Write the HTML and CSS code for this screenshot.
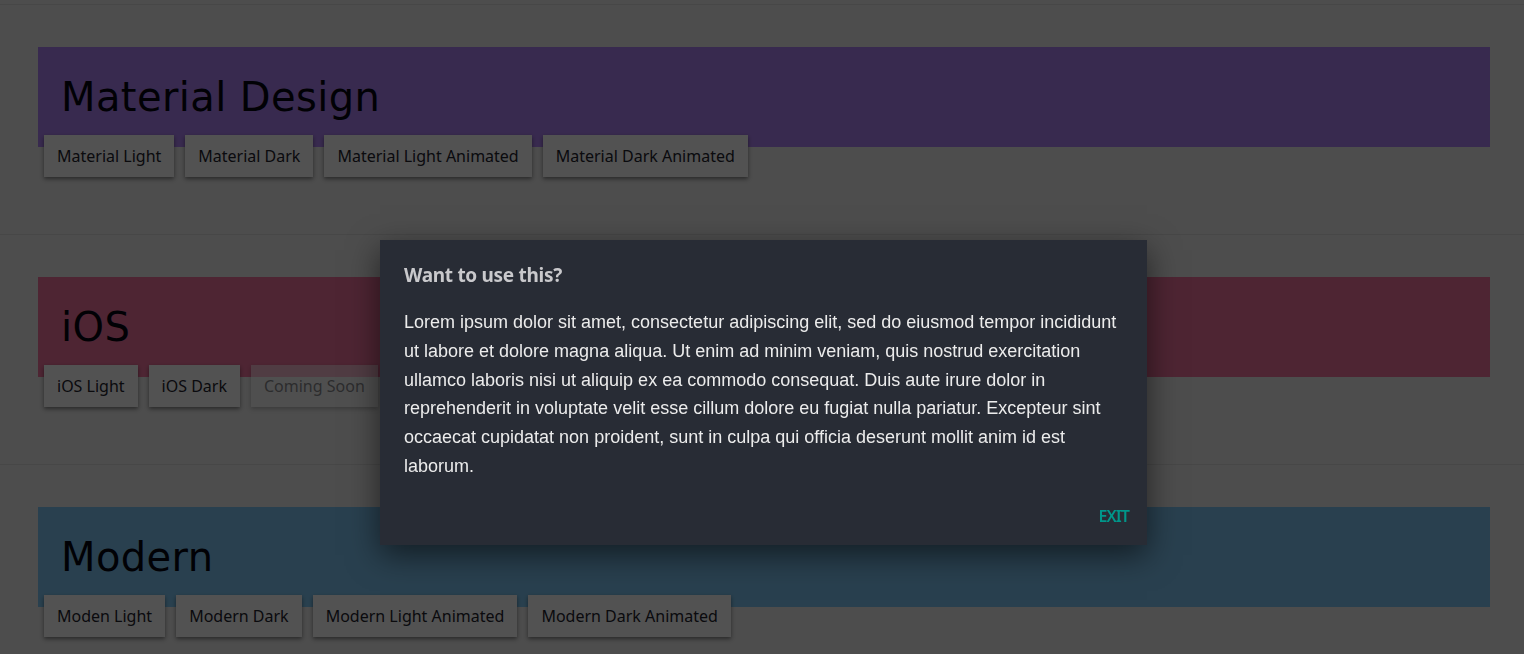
FILE: index.html
```html
<!DOCTYPE html>
<html lang="en">
<head>
    <meta charset="UTF-8">
    <meta name="viewport" content="width=device-width, initial-scale=1.0">
    <title>Themes</title>
    <link rel="stylesheet" href="styles.css">
</head>
<body>
    <section class="theme">
        <div class="banner banner-material">
            <h1>Material Design</h1>
        </div>
        <div class="buttons">
            <button>Material Light</button>
            <button>Material Dark</button>
            <button>Material Light Animated</button>
            <button>Material Dark Animated</button>
        </div>
    </section>

    <section class="theme">
        <div class="banner banner-ios">
            <h1>iOS</h1>
        </div>
        <div class="buttons">
            <button>iOS Light</button>
            <button>iOS Dark</button>
            <button class="soon" disabled>Coming Soon</button>
        </div>
    </section>

    <section class="theme">
        <div class="banner banner-modern">
            <h1>Modern</h1>
        </div>
        <div class="buttons">
            <button>Moden Light</button>
            <button>Modern Dark</button>
            <button>Modern Light Animated</button>
            <button>Modern Dark Animated</button>
        </div>
    </section>

    <div class="overlay"></div>

    <div class="dialog">
        <h2>Want to use this?</h2>
        <p>Lorem ipsum dolor sit amet, consectetur adipiscing elit, sed do eiusmod tempor incididunt ut labore et dolore magna aliqua. Ut enim ad minim veniam, quis nostrud exercitation ullamco laboris nisi ut aliquip ex ea commodo consequat. Duis aute irure dolor in reprehenderit in voluptate velit esse cillum dolore eu fugiat nulla pariatur. Excepteur sint occaecat cupidatat non proident, sunt in culpa qui officia deserunt mollit anim id est laborum.</p>
        <div class="dialog-actions">
            <button class="exit">EXIT</button>
        </div>
    </div>
</body>
</html>
```

FILE: styles.css
```css
body {
    margin: 0;
    padding-top: 4px;
    background: #eeeeee;
    font-family: "Noto Sans", "Open Sans", sans-serif;
    overflow: hidden;
}

.theme {
    box-sizing: border-box;
    height: 230px;
    padding: 42px 34px 0 38px;
    border-top: 1px solid #dcdcdc;
}

.banner {
    height: 100px;
    padding: 0 23px;
    display: flex;
    align-items: center;
}

.banner h1 {
    margin: 0;
    font-family: "DejaVu Sans", sans-serif;
    font-weight: normal;
    font-size: 40px;
    color: #050510;
    letter-spacing: 0.4px;
}

.banner-material {
    background: #af83f4;
}

.banner-ios {
    background: #f1749f;
}

.banner-modern {
    background: #80c8f4;
}

.buttons {
    display: flex;
    gap: 11px;
    margin-top: -12px;
    padding-left: 6px;
}

.buttons button {
    height: 42px;
    padding: 0 13px;
    border: none;
    background: #ffffff;
    color: #24242e;
    font-family: "Noto Sans", sans-serif;
    font-size: 16px;
    box-shadow: 0 2px 4px rgba(0, 0, 0, 0.45);
    cursor: pointer;
}

.buttons button.soon {
    opacity: 0.5;
    cursor: default;
}

.overlay {
    position: fixed;
    inset: 0;
    background: rgba(0, 0, 0, 0.68);
}

.dialog {
    position: fixed;
    top: 240px;
    left: 380px;
    width: 767px;
    box-sizing: border-box;
    padding: 22px 24px 18px;
    background: #282c35;
    box-shadow: 0 10px 30px rgba(0, 0, 0, 0.55);
}

.dialog h2 {
    margin: 0 0 20px;
    font-family: "Noto Sans", sans-serif;
    font-size: 19px;
    font-weight: bold;
    color: #c9c9cc;
    line-height: 26px;
    letter-spacing: -0.3px;
}

.dialog p {
    margin: 0;
    font-family: "Liberation Sans", Arial, sans-serif;
    font-size: 18px;
    line-height: 28.8px;
    color: #ececec;
}

.dialog-actions {
    display: flex;
    justify-content: flex-end;
    margin-top: 24px;
}

.exit {
    border: none;
    background: none;
    padding: 0;
    height: 22px;
    margin-right: -6px;
    font-family: "Noto Sans", sans-serif;
    font-size: 16px;
    font-weight: 600;
    color: #00968a;
    letter-spacing: -0.9px;
    cursor: pointer;
}
```
